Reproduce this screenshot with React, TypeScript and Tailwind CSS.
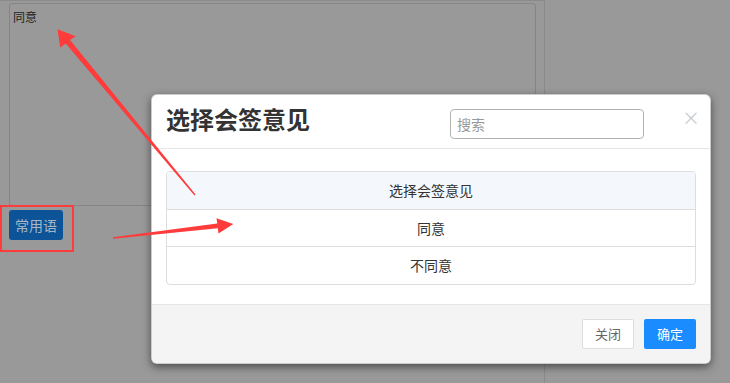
import React from "react";

const FONT = { fontFamily: '"Noto Sans CJK SC", "Noto Sans", sans-serif' };

const opinions = ["同意", "不同意"];

function Arrows() {
  return (
    <svg
      className="absolute left-0 top-0 pointer-events-none"
      width="730"
      height="383"
      viewBox="0 0 730 383"
    >
      {/* 指向意见框 */}
      <polygon
        fill="#ff3b3b"
        points="195.54,194.55 70,39.97 75.6,36.2 57.5,29.3 60.2,47.4 65.7,43.53 194.46,195.45"
      />
      {/* 指向列表 */}
      <polygon
        fill="#ff3b3b"
        points="112.91,237.21 217.22,223.52 216.5,218.2 233.3,224 218.5,233.6 217.78,228.28 113.09,238.79"
      />
    </svg>
  );
}

export default function App() {
  return (
    <div
      className="relative w-[730px] h-[383px] overflow-hidden bg-[#999999]"
      style={FONT}
    >
      {/* 页面（遮罩下） */}
      <div className="w-[545px] h-full border-r border-t border-[#8a8a8a] pl-[9px] pt-[2px]">
        <div className="w-[527px] h-[203px] border border-[#858585] rounded-[3px] px-[3px] py-[4px] text-[12px] leading-[18px] text-[#1e1e1e]">
          同意
        </div>
        <button className="mt-[4px] w-[54px] h-[30px] rounded-[3px] bg-[#0c5497] text-[14px] text-[#a9b6c6] flex items-center justify-center">
          常用语
        </button>
      </div>

      {/* 红框标注 */}
      <div className="absolute left-0 top-[205px] w-[74px] h-[47px] border-2 border-[#ff3b3b]" />

      {/* 弹窗 */}
      <div className="absolute left-[151px] top-[94px] w-[560px] bg-white rounded-[6px] border border-black/20 shadow-[0_3px_9px_rgba(0,0,0,0.5)] overflow-hidden">
        <div className="h-[54px] border-b border-[#e5e5e5] flex items-start pl-[14px] pr-[16px] pt-[6px]">
          <h4 className="text-[24px] leading-[36px] font-bold text-[#333]">
            选择会签意见
          </h4>
          <input
            placeholder="搜索"
            className="ml-auto mt-[8px] w-[194px] h-[30px] border border-[#b3b3b3] rounded-[4px] px-[6px] text-[14px] outline-none placeholder:text-[#999]"
          />
          <button className="ml-[38px] mt-[7px] w-[12px] text-[18px] leading-[18px] text-[#cccccc]">
            ×
          </button>
        </div>

        <div className="px-[14px] pt-[22px] pb-[19px]">
          <div className="border border-[#dddddd] rounded-[4px] overflow-hidden text-[14px] text-[#333]">
            <div className="h-[38px] flex items-center justify-center bg-[#f4f8fd] border-b border-[#dddddd]">
              选择会签意见
            </div>
            {opinions.map((o, i) => (
              <div
                key={o}
                className={`h-[37px] flex items-center justify-center ${
                  i < opinions.length - 1 ? "border-b border-[#dddddd]" : ""
                }`}
              >
                {o}
              </div>
            ))}
          </div>
        </div>

        <div className="border-t border-[#e5e5e5] bg-[#f4f4f4] flex justify-end gap-[10px] px-[14px] pt-[14px] pb-[14px]">
          <button className="w-[52px] h-[30px] bg-white border border-[#dddddd] rounded-[2px] text-[13px] text-[#666]">
            关闭
          </button>
          <button className="w-[52px] h-[30px] bg-[#1a8cff] rounded-[2px] text-[13px] text-white">
            确定
          </button>
        </div>
      </div>

      <Arrows />
    </div>
  );
}
